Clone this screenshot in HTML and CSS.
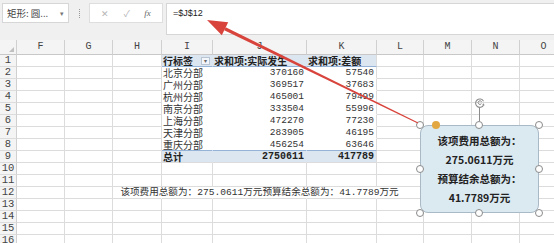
FILE: index.html
```html
<!DOCTYPE html>
<html lang="zh-CN">
<head>
    <meta charset="UTF-8">
    <title>数据透视表</title>
    <link rel="stylesheet" href="styles.css">
</head>
<body>
    <div class="toolbar">
        <div class="namebox"><span>矩形: 圆...</span><span class="drop">▾</span></div>
        <div class="sep"><span></span></div>
        <div class="fxbtns">
            <span class="btn">✕</span>
            <span class="btn">✓</span>
            <span class="btn fx">fx</span>
        </div>
        <div class="formula">=$J$12</div>
    </div>

    <div class="sheet">
        <!-- column headers -->
        <div class="corner"><span class="tri"></span></div>
        <div class="colhdr">F</div><div class="colhdr">G</div><div class="colhdr">H</div><div class="colhdr">I</div>
        <div class="colhdr">J</div><div class="colhdr">K</div><div class="colhdr">L</div><div class="colhdr">M</div>
        <div class="colhdr">N</div><div class="colhdr">O</div>

        <!-- row 1 -->
        <div class="rowhdr">1</div><div class="c"></div><div class="c"></div><div class="c"></div>
        <div class="c ph"><span>行标签</span><span class="filter">▾</span></div>
        <div class="c ph">求和项:实际发生</div>
        <div class="c ph end">求和项:差额</div>
        <div class="c"></div><div class="c"></div><div class="c"></div><div class="c"></div>

        <!-- rows 2-8 -->
        <div class="rowhdr">2</div><div class="c"></div><div class="c"></div><div class="c"></div>
        <div class="c pv">北京分部</div><div class="c pv num">370160</div><div class="c pv num end">57540</div>
        <div class="c"></div><div class="c"></div><div class="c"></div><div class="c"></div>

        <div class="rowhdr">3</div><div class="c"></div><div class="c"></div><div class="c"></div>
        <div class="c pv">广州分部</div><div class="c pv num">369517</div><div class="c pv num end">37683</div>
        <div class="c"></div><div class="c"></div><div class="c"></div><div class="c"></div>

        <div class="rowhdr">4</div><div class="c"></div><div class="c"></div><div class="c"></div>
        <div class="c pv">杭州分部</div><div class="c pv num">465001</div><div class="c pv num end">79499</div>
        <div class="c"></div><div class="c"></div><div class="c"></div><div class="c"></div>

        <div class="rowhdr">5</div><div class="c"></div><div class="c"></div><div class="c"></div>
        <div class="c pv">南京分部</div><div class="c pv num">333504</div><div class="c pv num end">55996</div>
        <div class="c"></div><div class="c"></div><div class="c"></div><div class="c"></div>

        <div class="rowhdr">6</div><div class="c"></div><div class="c"></div><div class="c"></div>
        <div class="c pv">上海分部</div><div class="c pv num">472270</div><div class="c pv num end">77230</div>
        <div class="c"></div><div class="c"></div><div class="c"></div><div class="c"></div>

        <div class="rowhdr">7</div><div class="c"></div><div class="c"></div><div class="c"></div>
        <div class="c pv">天津分部</div><div class="c pv num">283905</div><div class="c pv num end">46195</div>
        <div class="c"></div><div class="c"></div><div class="c"></div><div class="c"></div>

        <div class="rowhdr">8</div><div class="c"></div><div class="c"></div><div class="c"></div>
        <div class="c pv pre">重庆分部</div><div class="c pv pre num">456254</div><div class="c pv pre num end">63646</div>
        <div class="c"></div><div class="c"></div><div class="c"></div><div class="c"></div>

        <!-- row 9 total -->
        <div class="rowhdr">9</div><div class="c"></div><div class="c"></div><div class="c"></div>
        <div class="c pt">总计</div><div class="c pt num">2750611</div><div class="c pt num end">417789</div>
        <div class="c"></div><div class="c"></div><div class="c"></div><div class="c"></div>

        <div class="rowhdr">10</div><div class="c"></div><div class="c"></div><div class="c"></div><div class="c"></div><div class="c"></div>
        <div class="c"></div><div class="c"></div><div class="c"></div><div class="c"></div><div class="c"></div>

        <div class="rowhdr">11</div><div class="c"></div><div class="c"></div><div class="c"></div><div class="c"></div><div class="c"></div>
        <div class="c"></div><div class="c"></div><div class="c"></div><div class="c"></div><div class="c"></div>

        <div class="rowhdr">12</div><div class="c"></div><div class="c"></div><div class="c nr"></div><div class="c nr"></div>
        <div class="c nr spill"><span>该项费用总额为：275.0611万元预算结余总额为：41.7789万元</span></div>
        <div class="c nr"></div><div class="c"></div><div class="c"></div><div class="c"></div><div class="c"></div>

        <div class="rowhdr">13</div><div class="c"></div><div class="c"></div><div class="c"></div><div class="c"></div><div class="c"></div>
        <div class="c"></div><div class="c"></div><div class="c"></div><div class="c"></div><div class="c"></div>

        <div class="rowhdr">14</div><div class="c"></div><div class="c"></div><div class="c"></div><div class="c"></div><div class="c"></div>
        <div class="c"></div><div class="c"></div><div class="c"></div><div class="c"></div><div class="c"></div>

        <div class="rowhdr">15</div><div class="c"></div><div class="c"></div><div class="c"></div><div class="c"></div><div class="c"></div>
        <div class="c"></div><div class="c"></div><div class="c"></div><div class="c"></div><div class="c"></div>

        <div class="rowhdr">16</div><div class="c"></div><div class="c"></div><div class="c"></div><div class="c"></div><div class="c"></div>
        <div class="c"></div><div class="c"></div><div class="c"></div><div class="c"></div><div class="c"></div>
    </div>

    <!-- floating rounded rectangle with its selection handles -->
    <div class="shape">
        <div class="line">该项费用总额为：</div>
        <div class="line">275.0611万元</div>
        <div class="line">预算结余总额为：</div>
        <div class="line">41.7789万元</div>

        <span class="rot-line"></span>
        <svg class="rot" width="12" height="12" viewBox="0 0 12 12">
            <path d="M9.5 4.2 A4.2 4.2 0 1 0 9.6 8" fill="none" stroke="#8c8c8c" stroke-width="1.1"/>
            <path d="M7.4 6.6 A1.8 1.8 0 1 1 7.6 5" fill="none" stroke="#8c8c8c" stroke-width="1"/>
            <path d="M8.2 7.4 L10.8 8.6 L9.4 6.2 Z" fill="#8c8c8c"/>
        </svg>
        <span class="h tl"></span><span class="h tc"></span><span class="h tr"></span>
        <span class="h ml"></span><span class="h mr"></span>
        <span class="h bl"></span><span class="h bc"></span><span class="h br"></span>
        <span class="adj"></span>
    </div>

    <!-- red arrow from the shape to the formula bar -->
    <svg class="arrow" width="554" height="243" viewBox="0 0 554 243">
        <polygon points="225.7,27.2 224.2,30.3 417.8,123.5 418.2,122.6" fill="#d8443c"/>
        <polygon points="207,20 228.2,22.2 221.8,35.2" fill="#d8443c"/>
    </svg>
</body>
</html>
```

FILE: styles.css
```css
body {
    margin: 0;
    width: 554px;
    height: 243px;
    overflow: hidden;
    position: relative;
    background: #f0f0f0;
    font-family: "Noto Sans CJK SC", sans-serif;
    color: #333;
}

/* formula bar */
.toolbar {
    height: 40px;
    box-sizing: border-box;
    display: flex;
    align-items: flex-start;
    padding: 3px 0 0 2px;
}
.namebox {
    width: 67px;
    height: 20px;
    box-sizing: border-box;
    background: #fff;
    border: 1px solid #d6d6d6;
    display: flex;
    align-items: center;
    justify-content: space-between;
    padding: 0 4px;
    font-size: 9.5px;
    color: #444;
}
.namebox .drop {
    font-size: 7px;
    color: #777;
}
.sep {
    width: 20px;
    display: flex;
    justify-content: center;
    padding-top: 6px;
}
.sep span {
    height: 9px;
    border-left: 1px dotted #999;
}
.fxbtns {
    width: 74px;
    height: 20px;
    box-sizing: border-box;
    background: #fff;
    border: 1px solid #dedede;
    display: flex;
    align-items: center;
    justify-content: space-around;
    padding: 0 4px;
}
.btn {
    font-size: 9px;
    color: #b5b5b5;
}
.fx {
    font-family: "Liberation Serif", serif;
    font-style: italic;
    color: #666;
}
.formula {
    flex: 1;
    margin-left: 3px;
    height: 32px;
    box-sizing: border-box;
    background: #fff;
    border: 1px solid #d6d6d6;
    border-right: none;
    padding: 4px 0 0 6px;
    font-family: "Liberation Sans", sans-serif;
    font-size: 9px;
    color: #222;
}

/* worksheet grid */
.sheet {
    display: grid;
    grid-template-columns: 17px 48px 48px 49px 51px 94px 70px 47px 48px 48px 48px;
    grid-template-rows: 15px repeat(16, 12px);
    background: #fff;
    width: 568px;
}
.corner, .colhdr, .rowhdr {
    background: #f4f4f4;
    box-sizing: border-box;
    border-right: 1px solid #d0d0d0;
    border-bottom: 1px solid #c8c8c8;
    font-family: "Liberation Mono", monospace;
    color: #444;
}
.corner {
    position: relative;
}
.corner .tri {
    position: absolute;
    right: 2px;
    bottom: 2px;
    border-left: 5px solid transparent;
    border-bottom: 5px solid #c0c0c0;
}
.colhdr {
    font-size: 10px;
    line-height: 14px;
    text-align: center;
}
.rowhdr {
    font-size: 10.5px;
    line-height: 11px;
    text-align: center;
    border-bottom-color: #dcdcdc;
}
.c {
    box-sizing: border-box;
    border-right: 1px solid #dcdcdc;
    border-bottom: 1px solid #dcdcdc;
    font-size: 10px;
    line-height: 11px;
    white-space: nowrap;
    padding: 0 1px;
}
.c.nr {
    border-right-color: transparent;
}

/* pivot table */
.ph, .pt {
    background: #dce6f1;
    font-weight: bold;
    color: #222;
    border-right-color: #dce6f1;
}
.ph {
    border-bottom-color: #95b3d7;
    display: flex;
    align-items: center;
    justify-content: space-between;
}
.pv {
    border-right-color: transparent;
    border-bottom-color: transparent;
}
.pv.pre {
    border-bottom-color: #95b3d7;
}
.pv.end, .ph.end, .pt.end {
    border-right-color: #dcdcdc;
}
.num {
    text-align: right;
    font-family: "Liberation Mono", monospace;
    font-size: 9.5px;
    padding-right: 2px;
}
.pt.num {
    font-size: 10px;
}
.filter {
    width: 9px;
    height: 8px;
    box-sizing: border-box;
    border: 1px solid #b8c4d2;
    background: #f2f5f9;
    font-size: 6px;
    line-height: 6px;
    text-align: center;
    color: #666;
    font-weight: normal;
    margin-right: 1px;
}
.spill {
    display: flex;
    justify-content: center;
    overflow: visible;
}
.spill span {
    font-family: "Liberation Mono", "Noto Sans CJK SC", monospace;
    font-size: 9.6px;
    color: #333;
}

/* floating shape */
.shape {
    position: absolute;
    left: 420px;
    top: 125px;
    width: 119px;
    height: 88px;
    box-sizing: border-box;
    background: #dbe9f1;
    border: 1px solid #a9b9c5;
    border-radius: 8px;
    padding-top: 5px;
    text-align: center;
    font-weight: bold;
    font-size: 10.5px;
    line-height: 19px;
    color: #222;
}
.h {
    position: absolute;
    width: 8px;
    height: 8px;
    box-sizing: border-box;
    border: 1px solid #8a8a8a;
    border-radius: 50%;
    background: #fff;
}
.tl { left: -5px; top: -5px; }
.tc { left: 54px; top: -5px; }
.tr { right: -5px; top: -5px; }
.ml { left: -5px; top: 39px; }
.mr { right: -5px; top: 39px; }
.bl { left: -5px; bottom: -5px; }
.bc { left: 54px; bottom: -5px; }
.br { right: -5px; bottom: -5px; }
.adj {
    position: absolute;
    left: 11px;
    top: -5px;
    width: 8px;
    height: 8px;
    border-radius: 50%;
    background: #e2a740;
}
.rot-line {
    position: absolute;
    left: 58px;
    top: -18px;
    height: 13px;
    border-left: 1px solid #8c8c8c;
}
.rot {
    position: absolute;
    left: 53px;
    top: -29px;
}

.arrow {
    position: absolute;
    left: 0;
    top: 0;
    pointer-events: none;
}
```
